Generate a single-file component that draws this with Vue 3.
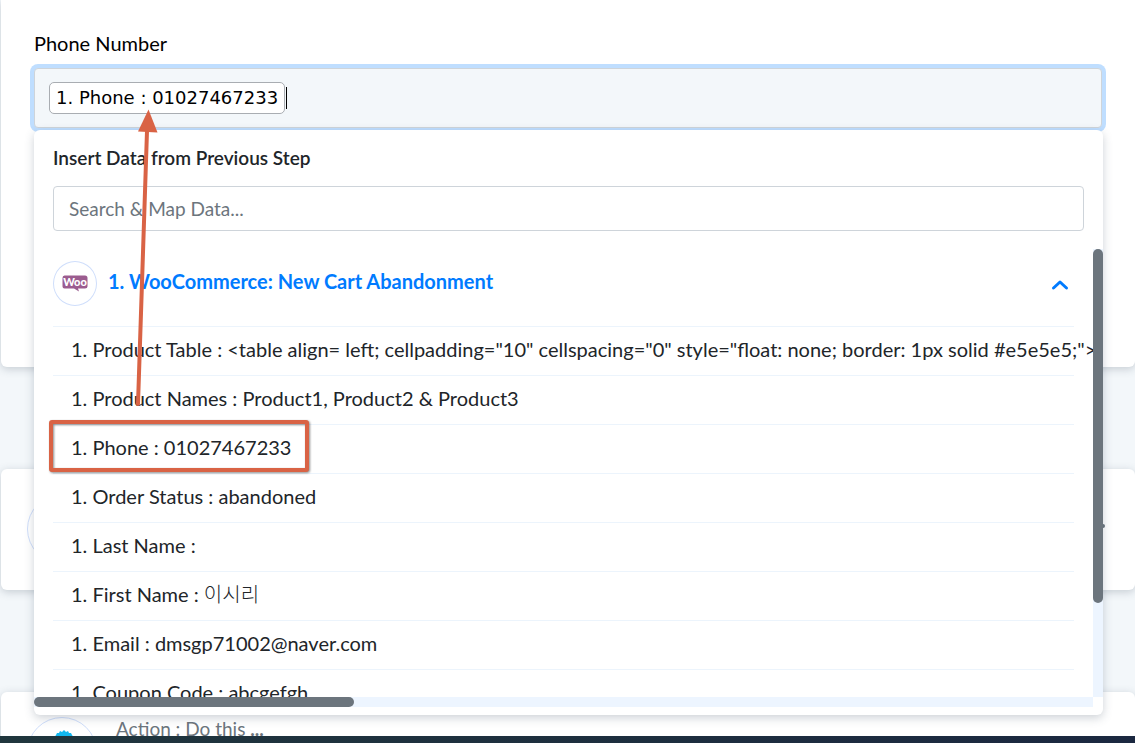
<script setup>
import { ref } from 'vue'

const search = ref('')
const open = ref(true)
const items = [
  { name: 'Product Table', value: '<table align= left; cellpadding="10" cellspacing="0" style="float: none; border: 1px solid #e5e5e5;">' },
  { name: 'Product Names', value: 'Product1, Product2 & Product3' },
  { name: 'Phone', value: '01027467233' },
  { name: 'Order Status', value: 'abandoned' },
  { name: 'Last Name', value: '' },
  { name: 'First Name', value: '이시리', korean: true },
  { name: 'Email', value: 'dmsgp71002@naver.com' },
  { name: 'Coupon Code', value: 'abcgefgh' }
]
</script>

<template>
  <main class="page">
    <section class="card form-card">
      <div id="phone-label" class="label">Phone Number</div>
      <div class="field-wrap">
        <div class="field" role="textbox" aria-labelledby="phone-label" tabindex="0">
          <span class="chip">1. Phone : 01027467233</span>
          <span class="caret"></span>
        </div>

        <div class="dropdown">
          <label class="heading" for="map-search">Insert Data from Previous Step</label>
          <input id="map-search" v-model="search" class="search" type="text" placeholder="Search &amp; Map Data..." />
          <div class="scroller">
            <div class="viewport">
              <button class="group" type="button" :aria-expanded="open" @click="open = !open">
                <span class="badge">
                  <svg width="26" height="17" viewBox="0 0 26 17" aria-hidden="true">
                    <path d="M2.500 0.500H23Q25.500 0.500 25.500 3V11.500Q25.500 13.500 23 13.500H16L17 16.500L12 13.500H2.500Q0.500 13.500 0.500 11.500V3Q0.500 0.500 2.500 0.500Z" fill="#9b5c8f" />
                    <text x="13" y="11" text-anchor="middle" class="woo">Woo</text>
                  </svg>
                </span>
                <span class="group-title">1. WooCommerce: New Cart Abandonment</span>
                <svg class="chevron" width="18" height="12" viewBox="0 0 18 12" aria-hidden="true">
                  <path d="M2.500 9L9 3L15.500 9" fill="none" stroke="#007bff" stroke-width="3" stroke-linecap="round" stroke-linejoin="round" />
                </svg>
              </button>
              <ul v-if="open" class="rows">
                <li v-for="item in items" :key="item.name" class="row">
                  1. {{ item.name }} : <span :class="{ korean: item.korean }">{{ item.value }}</span>
                </li>
              </ul>
            </div>
            <div class="track-y"><div class="thumb-y"></div></div>
            <div class="track-x"><div class="thumb-x"></div></div>
          </div>
          <svg class="annotation" width="290" height="380" viewBox="0 0 290 380" aria-hidden="true">
            <rect x="17" y="314" width="256" height="48" rx="1" class="frame" />
            <path d="M104 296L113 23" stroke="#d96345" stroke-width="4" stroke-linecap="round" />
            <path d="M114.500 1.500L104 23.500L123.500 24.500Z" fill="#d96345" />
          </svg>
        </div>
      </div>
    </section>

    <section class="card step">
      <span class="step-icon"></span>
      <span class="more"></span>
    </section>

    <section class="card step">
      <span class="step-icon">
        <svg width="44" height="44" viewBox="0 0 44 44" aria-hidden="true">
          <path d="M14 8L16 5L17 3L19 3L20 1L22 2L24 0L26 2L28 1L29 3L31 3L32 5L34 8V36Q24 46 14 36Z" fill="#12b8f0" />
        </svg>
      </span>
      <span class="step-text">Action : Do this <b>...</b></span>
    </section>
    <div class="bottom-bar"></div>
  </main>
</template>

<style>
body {
  background: #f3f7fa;
}
</style>

<style scoped>
* {
  box-sizing: border-box;
}
.page {
  height: 100vh;
  overflow: hidden;
  padding-left: 1px;
  background: #f3f7fa;
  color: #212529;
  font-family: Lato, "Noto Sans CJK KR", sans-serif;
  font-size: 19px;
  line-height: 24px;
}
.card {
  background: #fff;
  border-radius: 6px;
  box-shadow: 0 2px 8px rgba(60, 75, 95, 0.25);
}
.form-card {
  position: relative;
  z-index: 1;
  padding: 31px 33px 239px;
  border-radius: 0 0 6px 6px;
}
.label {
  margin-bottom: 13px;
  color: #000;
  font-size: 20px;
}
.field-wrap {
  position: relative;
}
.field {
  display: flex;
  align-items: center;
  height: 60px;
  padding: 0 14px;
  background: #f3f7fa;
  border: 1px solid #ced4da;
  border-radius: 4px;
  box-shadow: 0 0 0 4px #bfdeff;
}
.chip {
  padding: 3px 6px;
  border: 1px solid #a9adb2;
  border-radius: 5px;
  background: #fff;
  color: #000;
  font-family: "DejaVu Sans", sans-serif;
  font-size: 18px;
}
.caret {
  width: 1px;
  height: 22px;
  margin-left: 1px;
  background: #000;
}
.dropdown {
  position: absolute;
  top: 62px;
  left: 0;
  right: -1px;
  padding: 16px 0 8px;
  background: #fff;
  border-radius: 6px;
  box-shadow: 0 3px 10px rgba(60, 75, 95, 0.25);
}
.heading {
  display: block;
  margin: 0 19px 16px;
  font-weight: 600;
}
.search {
  display: block;
  width: calc(100% - 38px);
  height: 45px;
  margin: 0 19px 18px;
  padding: 0 15px;
  border: 1px solid #ced4da;
  border-radius: 4px;
  outline: none;
  background: #fff;
  color: #212529;
  font: inherit;
}
.search::placeholder {
  color: #6c757d;
  opacity: 1;
}
.scroller {
  display: grid;
  grid-template-columns: minmax(0, 1fr) 10px;
  grid-template-rows: 448px 10px;
}
.viewport {
  overflow: hidden;
  padding: 0 19px;
}
.group {
  display: flex;
  align-items: flex-start;
  gap: 11px;
  width: 100%;
  padding: 12px 5px 20px 0;
  border: 0;
  background: none;
  color: #007bff;
  font: inherit;
  font-size: 20px;
  font-weight: 700;
  text-align: left;
}
.badge {
  display: flex;
  align-items: center;
  justify-content: center;
  width: 44px;
  height: 45px;
  border: 1px solid #cfdefb;
  border-radius: 50%;
}
.woo {
  fill: #fff;
  font-family: Lato, sans-serif;
  font-size: 11px;
  font-weight: 900;
}
.group-title {
  flex: 1;
  padding-top: 8px;
}
.chevron {
  margin-top: 18px;
}
.rows {
  margin: 0;
  padding: 0;
  list-style: none;
}
.row {
  height: 49px;
  padding: 10px 18px;
  border-top: 1px solid #ecf4fc;
  font-size: 20px;
  white-space: nowrap;
}
.korean {
  font-family: "Noto Sans CJK KR", sans-serif;
  font-weight: 300;
  line-height: 20px;
}
.track-y,
.track-x {
  background: #edf5ff;
}
.thumb-y,
.thumb-x {
  background: #6c757d;
  border-radius: 5px;
}
.thumb-y {
  height: 79%;
}
.thumb-x {
  width: 320px;
  height: 10px;
}
.annotation {
  position: absolute;
  top: -22px;
  left: 0;
  overflow: visible;
  pointer-events: none;
}
.frame {
  fill: none;
  stroke: #d96345;
  stroke-width: 4px;
  filter: drop-shadow(1px 1px 1px rgba(0, 0, 0, 0.45));
}
.step {
  display: flex;
  gap: 19px;
  height: 121px;
  margin-top: 102px;
  padding: 25px 26px;
}
.step-icon {
  display: flex;
  align-items: center;
  justify-content: center;
  width: 70px;
  height: 70px;
  border: 1px solid #cfdefb;
  border-radius: 50%;
}
.step-text {
  color: #6c757d;
}
.more {
  width: 4px;
  height: 4px;
  margin: 30px 4px 0 auto;
  border-radius: 50%;
  background: #6c757d;
}
.bottom-bar {
  position: fixed;
  z-index: 2;
  right: 0;
  bottom: 0;
  left: 0;
  height: 7px;
  background: linear-gradient(90deg, #20363d, #1b2840);
}
</style>
